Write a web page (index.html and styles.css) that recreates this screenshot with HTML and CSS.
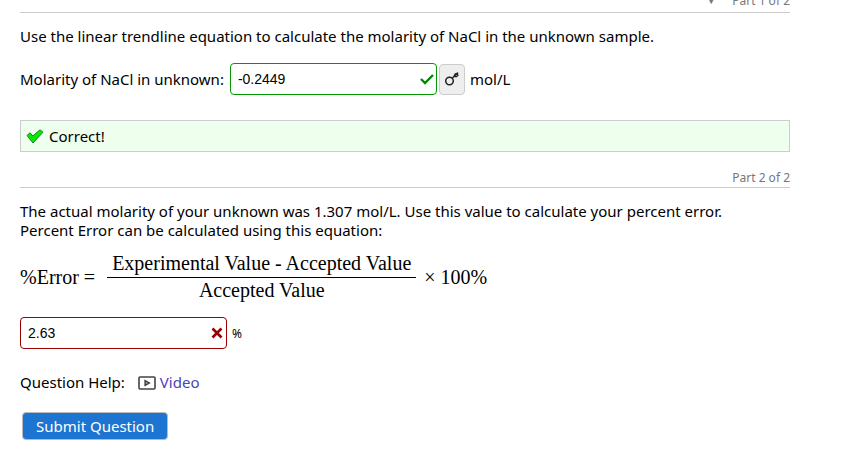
FILE: index.html
```html
<!DOCTYPE html>
<html lang="en">
<head>
    <meta charset="UTF-8">
    <meta name="viewport" content="width=device-width, initial-scale=1.0">
    <title>Question</title>
    <link rel="stylesheet" href="styles.css">
</head>
<body>
    <form class="question">
        <div class="part-header part-first">
            <span class="arrow">&#9660;</span>
            <span>Part 1 of 2</span>
        </div>

        <p class="prompt">Use the linear trendline equation to calculate the molarity of NaCl in the unknown sample.</p>
        <div class="answer-row">
            <label for="molarity">Molarity of NaCl in unknown:</label>
            <span class="answer-box correct">
                <input type="text" id="molarity" value="-0.2449">
                <svg class="mark" viewBox="0 0 14 12" aria-hidden="true">
                    <path d="M1 6 L5 10 L13 2" fill="none" stroke="#008800" stroke-width="2.4"/>
                </svg>
            </span>
            <button type="button" class="key-button" aria-label="Show answer">
                <svg width="16" height="16" viewBox="0 0 16 16" aria-hidden="true">
                    <g fill="none" stroke="#222" stroke-width="1.5">
                        <circle cx="5.5" cy="10" r="3.8"/>
                        <path d="M8.2 7.3 L14 1.8"/>
                        <path d="M10.2 5.2 L11 3 L13.2 2.2 L14 4.5 L12 5.8 Z" stroke-width="1.2"/>
                    </g>
                </svg>
            </button>
            <span class="unit">mol/L</span>
        </div>

        <div class="feedback">
            <svg width="18" height="16" viewBox="0 0 18 16" aria-hidden="true">
                <path d="M1 6.5 L4 3.8 L6.8 7 L14 0.8 L17 3.2 L7 14 Z" fill="#00ee00" stroke="#2a7a2a" stroke-width="1"/>
            </svg>
            <span>Correct!</span>
        </div>

        <div class="part-header">
            <span>Part 2 of 2</span>
        </div>

        <p class="prompt">The actual molarity of your unknown was 1.307 mol/L. Use this value to calculate your percent error.<br>Percent Error can be calculated using this equation:</p>
        <div class="equation">
            <span>%Error =</span>
            <span class="fraction">
                <span class="numerator">Experimental Value - Accepted Value</span>
                <span class="denominator">Accepted Value</span>
            </span>
            <span>&times; 100%</span>
        </div>
        <div class="answer-row percent-row">
            <span class="answer-box wrong">
                <input type="text" id="percent" value="2.63">
                <svg class="mark" viewBox="0 0 14 12" aria-hidden="true">
                    <path d="M2.5 1.5 L11.5 10.5 M11.5 1.5 L2.5 10.5" fill="none" stroke="#990000" stroke-width="2.6"/>
                </svg>
            </span>
            <label class="percent-label" for="percent">%</label>
        </div>

        <div class="help">
            <span>Question Help:</span>
            <a href="#video">
                <svg width="18" height="14" viewBox="0 0 18 14" aria-hidden="true">
                    <rect x="1" y="1" width="16" height="12" rx="1" fill="none" stroke="#444" stroke-width="1.6"/>
                    <path d="M7 4.5 L11.5 7 L7 9.5 Z" fill="#999" stroke="#333" stroke-width="1.2"/>
                </svg>
                Video
            </a>
        </div>

        <button type="submit" class="submit">Submit Question</button>
    </form>
</body>
</html>
```
FILE: styles.css
```css
body {
    font-family: "Noto Sans", "Open Sans", sans-serif;
    font-size: 15px;
    line-height: 19px;
    margin: 0;
    padding: 0 63px 0 20px;
    background-color: #fff;
    color: #000;
}
.question {
    margin: 0;
}
.part-header {
    display: flex;
    justify-content: flex-end;
    gap: 16px;
    border-bottom: 1px solid #ccc;
    color: #777;
    font-size: 12px;
    line-height: 19px;
}
.part-first {
    margin-top: -9px;
    padding-bottom: 2px;
}
.arrow {
    font-size: 10px;
}
.prompt {
    margin: 14px 0 0;
}
.answer-row {
    display: flex;
    align-items: center;
    margin-top: 17px;
}
.answer-box {
    display: flex;
    align-items: center;
    box-sizing: border-box;
    width: 207px;
    height: 32px;
    border: 1px solid #009900;
    border-radius: 4px;
}
.answer-box input {
    flex: 1;
    min-width: 0;
    padding: 0 0 0 7px;
    border: none;
    outline: none;
    background: none;
    font-family: "Liberation Sans", Arial, sans-serif;
    font-size: 14px;
}
.correct {
    margin-left: 6px;
}
.wrong {
    border-color: #990000;
}
.mark {
    width: 14px;
    height: 12px;
    margin-right: 2px;
}
.key-button {
    display: flex;
    align-items: center;
    justify-content: center;
    width: 26px;
    height: 31px;
    margin: 0 5px 0 2px;
    padding: 0;
    border: 1px solid #ccc;
    border-radius: 4px;
    background-color: #eee;
    cursor: pointer;
}
.feedback {
    display: flex;
    align-items: center;
    gap: 5px;
    margin: 25px 0 16px;
    padding: 6px 5px 5px;
    border: 1px solid #ccc;
    background-color: #eeffee;
}
.equation {
    display: flex;
    align-items: center;
    margin-top: 12px;
    font-family: "Liberation Serif", "Times New Roman", serif;
    font-size: 20px;
    line-height: 24px;
}
.fraction {
    margin: 0 8px 0 12px;
    text-align: center;
}
.numerator,
.denominator {
    display: block;
    padding: 0 5px;
}
.numerator {
    padding-bottom: 3px;
    line-height: 22px;
    border-bottom: 1px solid #000;
}
.percent-row {
    margin-top: 15px;
}
.percent-label {
    margin-left: 5px;
    font-size: 12px;
}
.help {
    display: flex;
    gap: 13px;
    margin-top: 24px;
}
.help a {
    display: flex;
    align-items: center;
    gap: 4px;
    color: #4a44b8;
    text-decoration: none;
}
.submit {
    margin: 20px 0 0 2px;
    padding: 3px 13px;
    border: 1px solid #bbb;
    border-radius: 4px;
    background-color: #1e74d1;
    color: #fff;
    font-family: inherit;
    font-size: 15px;
    line-height: 20px;
    cursor: pointer;
}
.submit:hover {
    background-color: #1a64b5;
}
```
